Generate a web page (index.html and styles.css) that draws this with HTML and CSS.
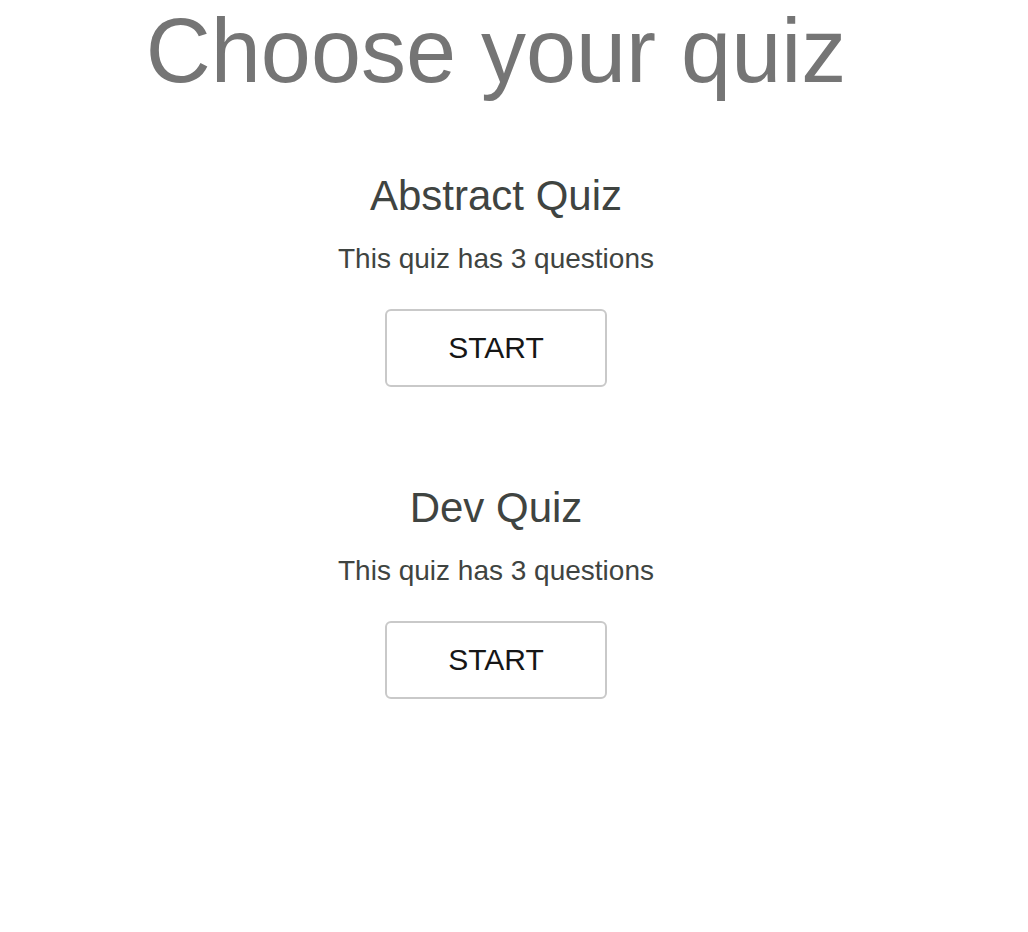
FILE: index.html
```html
<!DOCTYPE html>
<html>
<head>
<meta charset="utf-8">
<title>Choose your quiz</title>
<link rel="stylesheet" href="styles.css">
</head>
<body>
<main class="page">
  <h1 class="page-title">Choose your quiz</h1>
  <section class="quiz-list">
    <div class="quiz">
      <h2 class="quiz-name">Abstract Quiz</h2>
      <p class="quiz-info">This quiz has 3 questions</p>
      <button class="start-btn" type="button">START</button>
    </div>
    <div class="quiz">
      <h2 class="quiz-name">Dev Quiz</h2>
      <p class="quiz-info">This quiz has 3 questions</p>
      <button class="start-btn" type="button">START</button>
    </div>
  </section>
</main>
</body>
</html>
```
FILE: styles.css
```css
html, body {
  margin: 0;
  padding: 0;
  background: #ffffff;
}

body {
  font-family: "Liberation Sans", Arial, Helvetica, sans-serif;
}

.page {
  width: 992px;
  display: flex;
  flex-direction: column;
  align-items: center;
}

.page-title {
  margin: 0;
  font-size: 90px;
  font-weight: normal;
  line-height: normal;
  color: #757575;
}

.quiz-list {
  display: flex;
  flex-direction: column;
  align-items: center;
  gap: 97px;
  margin-top: 69px;
}

.quiz {
  display: flex;
  flex-direction: column;
  align-items: center;
}

.quiz-name {
  margin: 0;
  font-size: 42px;
  font-weight: normal;
  line-height: 48px;
  color: #3f4441;
}

.quiz-info {
  margin: 23px 0 0;
  font-size: 28px;
  line-height: 32px;
  color: #3f4441;
}

.start-btn {
  margin-top: 34px;
  width: 222px;
  height: 78px;
  border: 2px solid #c9c9c9;
  border-radius: 6px;
  background: #ffffff;
  font-family: "Liberation Sans", Arial, Helvetica, sans-serif;
  font-size: 30px;
  color: #161616;
  padding: 0;
  cursor: pointer;
}
```
